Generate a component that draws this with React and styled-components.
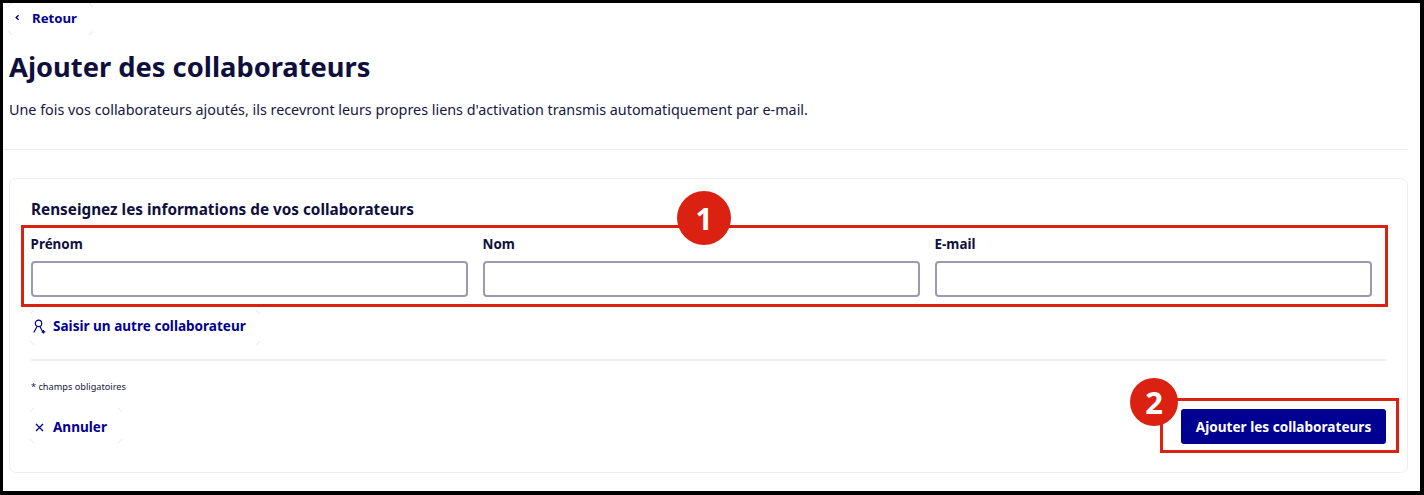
import styled, { createGlobalStyle, css } from 'styled-components';

const GlobalStyle = createGlobalStyle`
html, body {
  margin: 0;
  padding: 0;
  background: #fff;
}
* {
  box-sizing: border-box;
}
`;

// faint rounded corner ticks left around the tertiary links
const cornerTicks = css`
background-image:
  linear-gradient(135deg, transparent 40%, #e6e6ea 50%, transparent 60%),
  linear-gradient(45deg, transparent 40%, #e6e6ea 50%, transparent 60%),
  linear-gradient(45deg, transparent 40%, #e6e6ea 50%, transparent 60%),
  linear-gradient(135deg, transparent 40%, #e6e6ea 50%, transparent 60%);
background-size: 4px 4px;
background-repeat: no-repeat;
background-position: left top, right top, left bottom, right bottom;
`;

const Frame = styled.div`
width: 1424px;
height: 495px;
overflow: hidden;
background: #fff;
border-style: solid;
border-color: #000;
border-width: 3px 4px 4px 3px;
font-family: "Noto Sans", Lato, sans-serif;
color: #161640;
`;

const Header = styled.header`
width: 1405px;
height: 147px;
padding: 0 6px;
border-bottom: 1px solid #ececef;
`;

const BackLink = styled.a`
display: flex;
align-items: center;
gap: 12px;
width: 85px;
height: 32px;
margin-left: -1px;
padding: 0 0 3px 7px;
color: #000091;
font-size: 13.2px;
font-weight: 700;
${cornerTicks}
`;

const Title = styled.h1`
margin: 14px 0 0;
font-size: 27.3px;
line-height: 36px;
font-weight: 700;
color: #0f0f3d;
`;

const Intro = styled.p`
margin: 15px 0 0;
font-size: 14.35px;
line-height: 20px;
`;

const Card = styled.section`
width: 1399px;
height: 295px;
margin: 28px 0 0 6px;
padding: 20px 21px 0;
border: 1px solid #eeeef1;
border-radius: 7px;
`;

const CardTitle = styled.h2`
margin: 0;
font-size: 15.3px;
line-height: 20px;
font-weight: 700;
color: #0f0f3d;
`;

const FieldBox = styled.div`
position: relative;
display: grid;
grid-template-columns: repeat(3, 437.6px);
gap: 14.4px;
width: 1367px;
height: 82px;
margin: 6px 0 0 -10px;
padding: 7px 0 0 6.6px;
border: 3px solid #db2112;
`;

const Field = styled.label`
display: flex;
flex-direction: column;
gap: 8px;
`;

const FieldName = styled.span`
font-size: 13.4px;
line-height: 18px;
font-weight: 700;
color: #0f0f3d;
`;

const Input = styled.input`
height: 36px;
background: #fff;
border: 2px solid #9a9ab2;
border-radius: 4px;
`;

const Badge = styled.span`
position: absolute;
display: flex;
align-items: center;
justify-content: center;
width: ${(p) => p.$size}px;
height: ${(p) => p.$size}px;
top: ${(p) => p.$top}px;
left: ${(p) => p.$left}px;
border-radius: 50%;
background: #db2112;
color: #fff;
font-size: ${(p) => p.$font}px;
font-weight: 700;
`;

const LinkButton = styled.a`
display: flex;
align-items: center;
gap: ${(p) => p.$gap}px;
width: ${(p) => p.$width}px;
height: 35px;
margin-left: -1px;
padding-left: ${(p) => p.$pad}px;
color: #000091;
font-size: 13.55px;
font-weight: 700;
${cornerTicks}
`;

const AddRow = styled.div`
height: 54px;
padding-top: 3px;
border-bottom: 2px solid #f0f0f3;
width: 1356px;
`;

const AddLink = styled(LinkButton)`
padding-bottom: 3px;
`;

const Required = styled.p`
margin: 19px 0 0;
font-size: 9.2px;
line-height: 14px;
`;

const Footer = styled.div`
display: flex;
justify-content: space-between;
align-items: flex-start;
width: 1368px;
margin-top: 4px;
`;

const CancelLink = styled(LinkButton)`
margin-top: 10px;
padding-top: 3px;
`;

const SubmitBox = styled.div`
position: relative;
width: 239px;
height: 55px;
padding: 8px 10px 0 18px;
border: 3px solid #db2112;
`;

const SubmitButton = styled.button`
width: 205px;
height: 35px;
border: 0;
border-radius: 3px;
background: #000091;
color: #fff;
font-family: inherit;
font-size: 13.6px;
font-weight: 700;
`;

const PersonPlus = () => (
  <svg width="15" height="17" viewBox="0 0 15 17" fill="none" stroke="#000091" strokeWidth="1.2">
    <circle cx="6.5" cy="5.4" r="3.2" />
    <path d="M1.8 14.5 5 8.5M11 14.5 8 8.5" />
    <path d="M11.5 12v3.6M9.7 13.8h3.6" />
  </svg>
);

const Chevron = () => (
  <svg width="5" height="7" viewBox="0 0 5 7" fill="none" stroke="#000091" strokeWidth="1.4">
    <path d="M3.6 1.2 1.2 3.5l2.4 2.3" />
  </svg>
);

const Cross = () => (
  <svg width="9" height="9" viewBox="0 0 9 9" fill="none" stroke="#000091" strokeWidth="1.3">
    <path d="M1 1l7 7M8 1 1 8" />
  </svg>
);

const fields = ['Prénom', 'Nom', 'E-mail'];

const App = () => {
  return (
    <Frame>
      <GlobalStyle />
      <Header>
        <BackLink><Chevron />Retour</BackLink>
        <Title>Ajouter des collaborateurs</Title>
        <Intro>Une fois vos collaborateurs ajoutés, ils recevront leurs propres liens d'activation transmis automatiquement par e-mail.</Intro>
      </Header>
      <Card>
        <CardTitle>Renseignez les informations de vos collaborateurs</CardTitle>
        <FieldBox>
          {fields.map((name) => (
            <Field key={name}>
              <FieldName>{name}</FieldName>
              <Input />
            </Field>
          ))}
          <Badge $size={54} $top={-37} $left={653} $font={30}>1</Badge>
        </FieldBox>
        <AddRow>
          <AddLink $gap={6} $pad={2} $width={230}><PersonPlus />Saisir un autre collaborateur</AddLink>
        </AddRow>
        <Required>* champs obligatoires</Required>
        <Footer>
          <CancelLink $gap={9} $pad={5} $width={92}><Cross />Annuler</CancelLink>
          <SubmitBox>
            <SubmitButton>Ajouter les collaborateurs</SubmitButton>
            <Badge $size={48} $top={-23} $left={-33} $font={31}>2</Badge>
          </SubmitBox>
        </Footer>
      </Card>
    </Frame>
  );
};

export default App;
